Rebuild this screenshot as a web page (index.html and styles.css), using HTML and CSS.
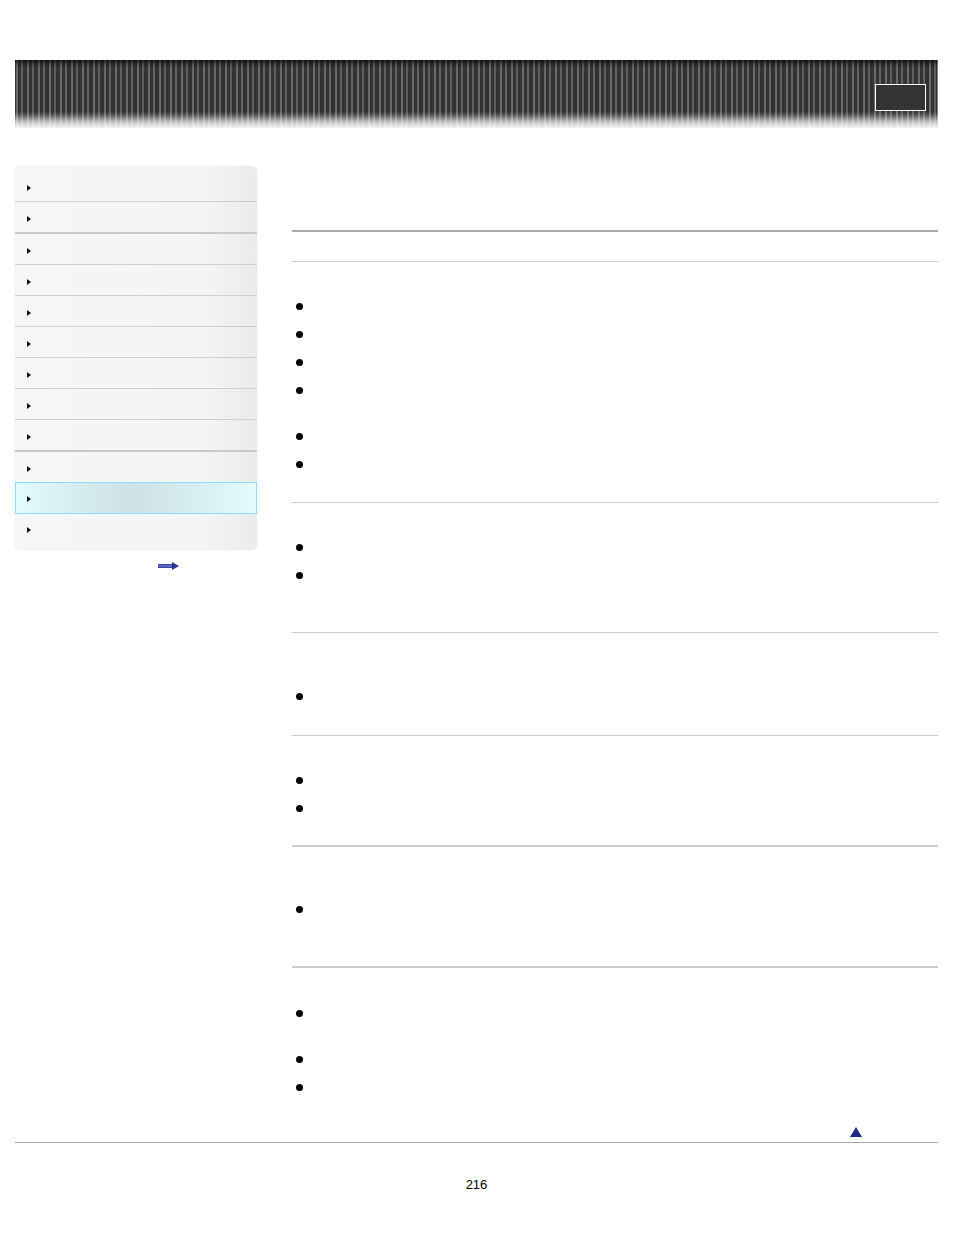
FILE: index.html
```html
<!DOCTYPE html>
<html>
<head>
<meta charset="utf-8">
<title>Help Guide</title>
<link rel="stylesheet" href="styles.css">
</head>
<body>
<header class="header">
  <div class="header-box"></div>
</header>
<div class="page">
  <nav class="sidebar">
    <ul class="menu">
      <li class="item first"><span class="tri"></span></li>
      <li class="item thick"><span class="tri"></span></li>
      <li class="item"><span class="tri"></span></li>
      <li class="item"><span class="tri"></span></li>
      <li class="item"><span class="tri"></span></li>
      <li class="item"><span class="tri"></span></li>
      <li class="item"><span class="tri"></span></li>
      <li class="item"><span class="tri"></span></li>
      <li class="item thick"><span class="tri"></span></li>
      <li class="item pre-active"><span class="tri"></span></li>
      <li class="item active"><span class="tri"></span></li>
      <li class="item last"><span class="tri"></span></li>
    </ul>
    <div class="more">
      <svg width="21" height="8" viewBox="0 0 21 8">
        <defs>
          <linearGradient id="ag" x1="0" y1="0" x2="0" y2="1">
            <stop offset="0" stop-color="#2a3590"/>
            <stop offset="0.5" stop-color="#6a78d8"/>
            <stop offset="1" stop-color="#2a3590"/>
          </linearGradient>
        </defs>
        <rect x="0" y="2" width="15" height="4" fill="url(#ag)"/>
        <polygon points="14,0 21,4 14,8" fill="#2a3590"/>
      </svg>
    </div>
  </nav>
  <main class="content">
    <div class="title-area"></div>
    <div class="sub-area"></div>
    <section class="sec s1">
      <div class="bullet"></div>
      <div class="bullet"></div>
      <div class="bullet"></div>
      <div class="bullet tall"></div>
      <div class="bullet"></div>
      <div class="bullet"></div>
    </section>
    <section class="sec s2">
      <div class="bullet"></div>
      <div class="bullet"></div>
    </section>
    <section class="sec s3">
      <div class="bullet"></div>
    </section>
    <section class="sec s4 heavy">
      <div class="bullet"></div>
      <div class="bullet"></div>
    </section>
    <section class="sec s5 heavy">
      <div class="bullet"></div>
    </section>
    <section class="sec s6 open">
      <div class="bullet tall"></div>
      <div class="bullet"></div>
      <div class="bullet"></div>
    </section>
    <div class="to-top"><span class="up"></span></div>
  </main>
</div>
<footer class="footer">
  <div class="page-num">216</div>
</footer>
</body>
</html>
```
FILE: styles.css
```css
html, body {
  margin: 0;
  padding: 0;
  background: #ffffff;
  font-family: "Liberation Sans", Arial, sans-serif;
}

body {
  padding-top: 60px;
}

.header {
  margin: 0 16px 0 15px;
  height: 68px;
  position: relative;
  background:
    linear-gradient(to bottom, rgba(0,0,0,0.65) 0px, rgba(0,0,0,0.25) 4px, rgba(0,0,0,0) 8px, rgba(0,0,0,0) 52px, rgba(255,255,255,0.25) 56px, rgba(255,255,255,0.7) 62px, rgba(255,255,255,0.95) 68px),
    linear-gradient(to right, #343434 0px, #343434 1px, #6a6a6a 1px, #6a6a6a 3px, #333333 3px, #333333 6px, #636363 6px, #636363 8px, #323232 8px, #323232 12px, #6b6b6b 12px, #6b6b6b 14px, #343434 14px, #343434 17px, #5f5f5f 17px, #5f5f5f 19px, #333333 19px, #333333 22px);
  background-size: 100% 100%, 22px 100%;
  background-repeat: no-repeat, repeat-x;
}

.header::after {
  content: "";
  position: absolute;
  right: 0;
  top: 0;
  bottom: 6px;
  width: 1px;
  background: rgba(255,255,255,0.35);
}

.header-box {
  position: absolute;
  left: 860px;
  top: 24px;
  width: 49px;
  height: 25px;
  border: 1px solid #ffffff;
  background: #333333;
}

.page {
  display: flex;
  margin: 38px 16px 0 15px;
}

.sidebar {
  width: 242px;
  flex: none;
}

.menu {
  list-style: none;
  margin: 0;
  padding: 0;
  border-radius: 6px;
  background: linear-gradient(to right, #f6f6f6 0%, #f5f5f5 75%, #ebebeb 100%);
  box-shadow: 0 0 1px rgba(0,0,0,0.25);
  overflow: hidden;
}

.item {
  height: 30px;
  border-bottom: 1px solid #cfcfcf;
  display: flex;
  align-items: flex-start;
  padding-left: 12px;
  box-sizing: content-box;
}

.item .tri {
  margin-top: 14px;
}

.item.first {
  height: 35px;
}

.item.first .tri {
  margin-top: 19px;
}

.item.thick {
  border-bottom: 2px solid #c9c9c9;
}

.item.pre-active {
  border-bottom: none;
  height: 30px;
}

.item.active {
  height: 30px;
  border: 1px solid #86e0f8;
  padding-left: 11px;
  background: linear-gradient(to right, #e2fbff 0%, #d3eaee 30%, #cde2e6 50%, #d6eef2 75%, #e2fcff 100%);
}

.item.active .tri {
  margin-top: 13px;
}

.item.last {
  border-bottom: none;
  height: 36px;
}

.item.last .tri {
  margin-top: 13px;
}

.tri {
  width: 0;
  height: 0;
  border-top: 3px solid transparent;
  border-bottom: 3px solid transparent;
  border-left: 4px solid #111111;
}

.more {
  padding: 12px 0 0 143px;
  height: 8px;
  line-height: 0;
}

.content {
  flex: 1;
  margin-left: 35px;
  min-width: 0;
}

.title-area {
  height: 64px;
  border-bottom: 2px solid #a9a9a9;
}

.sub-area {
  height: 29px;
  border-bottom: 1px solid #cccccc;
}

.sec {
  border-bottom: 1px solid #cccccc;
}

.sec.heavy {
  border-bottom: 2px solid #cccccc;
}

.sec.open {
  border-bottom: none;
}

.s1 { padding: 30px 0 24px; }
.s2 { padding: 30px 0 43px; }
.s3 { padding: 49px 0 25px; }
.s4 { padding: 30px 0 23px; }
.s5 { padding: 48px 0 43px; }
.s6 { padding: 31px 0 0; }

.bullet {
  height: 28px;
  position: relative;
}

.bullet.tall {
  height: 46px;
}

.bullet::before {
  content: "";
  position: absolute;
  left: 4px;
  top: 11px;
  width: 7px;
  height: 7px;
  border-radius: 50%;
  background: #000000;
}

.to-top {
  display: flex;
  justify-content: flex-end;
  padding: 26px 76px 0 0;
  height: 10px;
}

.up {
  width: 0;
  height: 0;
  border-left: 6px solid transparent;
  border-right: 6px solid transparent;
  border-bottom: 10px solid #1b2a86;
}

.footer {
  margin: 5px 16px 0 15px;
  border-top: 1px solid #a9a9a9;
}

.page-num {
  text-align: center;
  font-size: 13px;
  color: #000000;
  padding-top: 34px;
  line-height: 15px;
}
```
